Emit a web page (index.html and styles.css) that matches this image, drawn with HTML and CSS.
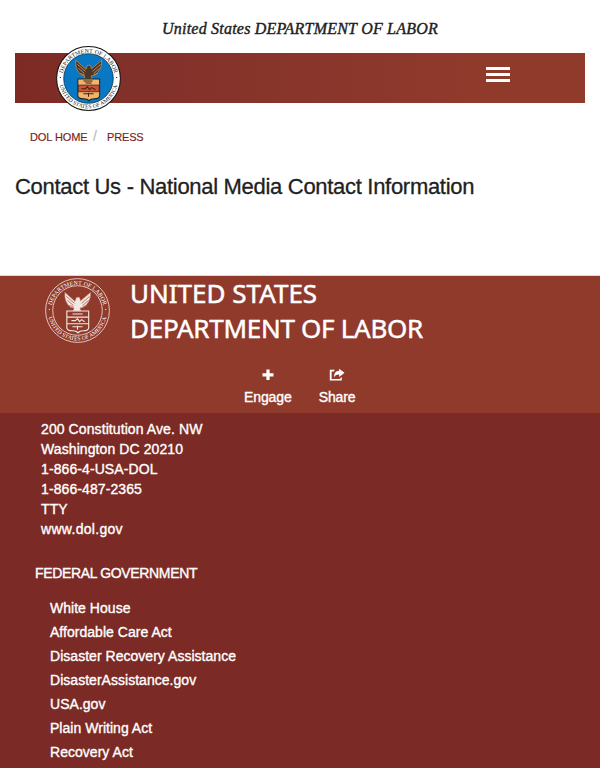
FILE: index.html
```html
<!DOCTYPE html>
<html lang="en">
<head>
<meta charset="utf-8">
<title>Contact Us - National Media Contact Information</title>
<link rel="stylesheet" href="styles.css">
</head>
<body>
<svg class="defs" aria-hidden="true">
  <defs>
    <path id="arc-top" d="M6.200 36A26 26 0 1 1 57.800 36"/>
    <path id="arc-bottom" d="M3.100 28A29.200 29.200 0 1 0 60.900 28"/>
    <g id="eagle">
      <path d="M19.500 14l10 9 1.500-4h3l1 3.500 10-8.500q.5 10-7.500 15l-3 .5 1 3h-8l1-3-3-.5q-7-5-6-15z"/>
      <path class="feather" d="M21 18l8 7M22 22l6 5M44 18l-8 7M43 22l-6 5M24 27l4 1.500M41 27l-4 1.500" fill="none"/>
    </g>
  </defs>
</svg>
<header class="masthead">
  <p class="agency">United States DEPARTMENT OF LABOR</p>
  <div class="navbar">
    <svg class="seal" viewBox="0 0 64 64">
      <circle cx="32" cy="32" r="31.400" fill="#fff" stroke="#111" stroke-width="1"/>
      <circle cx="32" cy="32" r="24.400" fill="#0878c4" stroke="#15374b" stroke-width=".8"/>
      <g class="ring-text"><text><textPath href="#arc-top" startOffset="50%">DEPARTMENT OF LABOR</textPath></text>
      <text class="lower"><textPath href="#arc-bottom" startOffset="50%">UNITED STATES OF AMERICA</textPath></text></g>
      <circle cx="4.200" cy="31" r=".6"/><circle cx="59.800" cy="31" r=".6"/>
      <use href="#eagle" fill="#4b3627" stroke="#c99255" stroke-width=".7"/>
      <path d="M21.500 32.500h21.500v17q-1 2.500-5 2.500-4 0-5.500 2-1.500-2-5.500-2-4.500 0-5.500-2.500z" fill="#f2b36c" stroke="#222" stroke-width="1"/>
      <path d="M22 38.500h20.500v6.500H22z" fill="#cf5137" stroke="#222" stroke-width=".7"/>
      <path d="M27 34.500h9m-7 2h6M25 42h4l2-2 2 3 2-2 4 2M27 47h10m-5-1v4" fill="none" stroke="#3b251c" stroke-width="1"/>
    </svg>
    <button class="menu" aria-label="Menu"><span></span><span></span><span></span></button>
  </div>
</header>
<main>
  <nav class="crumbs"><a>DOL HOME</a><span>/</span><a>PRESS</a></nav>
  <h1>Contact Us - National Media Contact Information</h1>
</main>
<footer>
  <section class="brand-area">
    <div class="brand">
      <svg class="footer-seal" viewBox="0 0 64 64">
        <circle cx="32" cy="32" r="31.400" class="line"/><circle cx="32" cy="32" r="24.400" class="line"/>
        <g class="ring-text light"><text><textPath href="#arc-top" startOffset="50%">DEPARTMENT OF LABOR</textPath></text>
        <text class="lower"><textPath href="#arc-bottom" startOffset="50%">UNITED STATES OF AMERICA</textPath></text></g>
        <circle cx="4.200" cy="31" r=".6" fill="#fff"/><circle cx="59.800" cy="31" r=".6" fill="#fff"/>
        <use href="#eagle" fill="#f4e6e2" stroke="#b36d61" stroke-width=".5"/>
        <path d="M21.500 32.500h21.500v17q-1 2.500-5 2.500-4 0-5.500 2-1.500-2-5.500-2-4.500 0-5.500-2.500zM22 38.500h20.500M22 45h20.500" class="line shield"/>
        <path d="M27 35.500h10M26 42h4l2-2 2 3 2-2 3 2M27 48h10m-5-1v4" class="line shield"/>
      </svg>
      <h2><span>UNITED STATES</span><span class="department">DEPARTMENT OF LABOR</span></h2>
    </div>
    <div class="actions">
      <a class="engage"><svg viewBox="0 0 14 14"><path d="M5.400 1.500h3.200v3.700h3.900v3.200H8.600V12H5.400V8.400H1.500V5.200h3.900z"/></svg><span>Engage</span></a>
      <a class="share"><svg viewBox="0 0 16 14"><path d="M6 1.800H.8v10.700h12V9l-2 1.700v.2H2.600V3.600h2z"/><path d="M10.200.7L15.500 4.700l-5.300 4.200V6.500C7.500 6.300 6 7.500 5 9.500c0-4.200 1.700-6.500 5.200-6.700z"/></svg><span>Share</span></a>
    </div>
  </section>
  <section class="details">
    <address><span>200 Constitution Ave. NW</span><span>Washington DC 20210</span><span>1-866-4-USA-DOL</span><span>1-866-487-2365</span><span>TTY</span><span>www.dol.gov</span></address>
    <h3>FEDERAL GOVERNMENT</h3>
    <ul><li>White House</li><li>Affordable Care Act</li><li>Disaster Recovery Assistance</li><li>DisasterAssistance.gov</li><li>USA.gov</li><li>Plain Writing Act</li><li>Recovery Act</li></ul>
  </section>
</footer>
</body>
</html>
```
FILE: styles.css
```css
* { box-sizing: border-box; }
body { margin: 0; height: 768px; overflow: hidden; background: #fff; color: #212121; font: 14px/20px "Liberation Sans", Arial, sans-serif; }
h1, h2, h3, p, ul { margin: 0; padding: 0; font-weight: normal; }
.defs { display: block; width: 0; height: 0; }
.masthead { height: 103px; padding: 0 15px; }
.agency { height: 53px; padding-top: 19px; text-align: center; white-space: nowrap; font: italic 16px/20px "Liberation Serif", serif; letter-spacing: .22px; -webkit-text-stroke: .4px; }
.navbar { height: 50px; display: flex; align-items: center; justify-content: space-between; padding: 0 75px 0 41px; background: linear-gradient(90deg, #7d2a24 0, #81302a 20%, #903a2c 80%); }
.seal { width: 65px; height: 65px; flex: none; overflow: visible; }
.ring-text { font: 5.800px "Liberation Serif", serif; text-anchor: middle; fill: #222; -webkit-text-stroke: 0; letter-spacing: .1px; }
.lower { font-size: 5.500px; }
.light { fill: #fff; }
.feather { stroke-width: .9; }
.line { fill: none; stroke: #e9cfc9; stroke-width: .9; }
.shield { stroke-width: 1.1; stroke: #f4e6e2; }
.menu { display: flex; flex-direction: column; gap: 3px; width: 24px; margin-top: -7px; padding: 0; border: 0; background: none; }
.menu span { height: 3px; background: #fff; }
.crumbs { display: flex; height: 47px; padding: 24px 30px 0; font-size: 11px; color: #791d17; letter-spacing: -.15px; -webkit-text-stroke: .15px; }
.crumbs a:first-child { width: 58px; letter-spacing: -.08px; }
.crumbs span { width: 19px; padding-left: 5px; color: #bbb; font-size: 14px; line-height: 18px; }
h1 { height: 125px; padding: 24px 15px 0; font-size: 22px; line-height: 26px; letter-spacing: -.3px; white-space: nowrap; -webkit-text-stroke: .3px; }
footer { color: #fff; -webkit-text-stroke: .35px; }
.brand-area { height: 138px; border-top: 1px solid #ded8cf; background: #903a2c; }
.brand { display: flex; height: 91px; padding-left: 45px; }
.footer-seal { width: 65px; height: 65px; margin-top: 2px; flex: none; overflow: visible; }
h2 { margin-left: 20px; font: 26px/35px "Noto Sans", sans-serif; white-space: nowrap; -webkit-text-stroke: .5px; }
h2 span, address span { display: block; width: max-content; }
.department { letter-spacing: -.28px; }
.actions { display: flex; gap: 27px; padding-left: 244px; letter-spacing: -.1px; }
.actions a { display: flex; flex-direction: column; align-items: center; }
.actions svg { width: 14px; height: 14px; margin: 1px 0 5px; fill: #fff; }
.actions .share svg { width: 16px; }
.details { height: 355px; overflow: hidden; padding: 6px 35px; background: #7c2a25; }
address { padding-left: 6px; font-style: normal; letter-spacing: .09px; }
address span:last-child { letter-spacing: .3px; }
h3 { margin-top: 24px; font-size: 14px; line-height: 20px; letter-spacing: -.34px; }
ul { margin-top: 13px; padding-left: 15px; list-style: none; line-height: 24px; letter-spacing: .03px; }
```
